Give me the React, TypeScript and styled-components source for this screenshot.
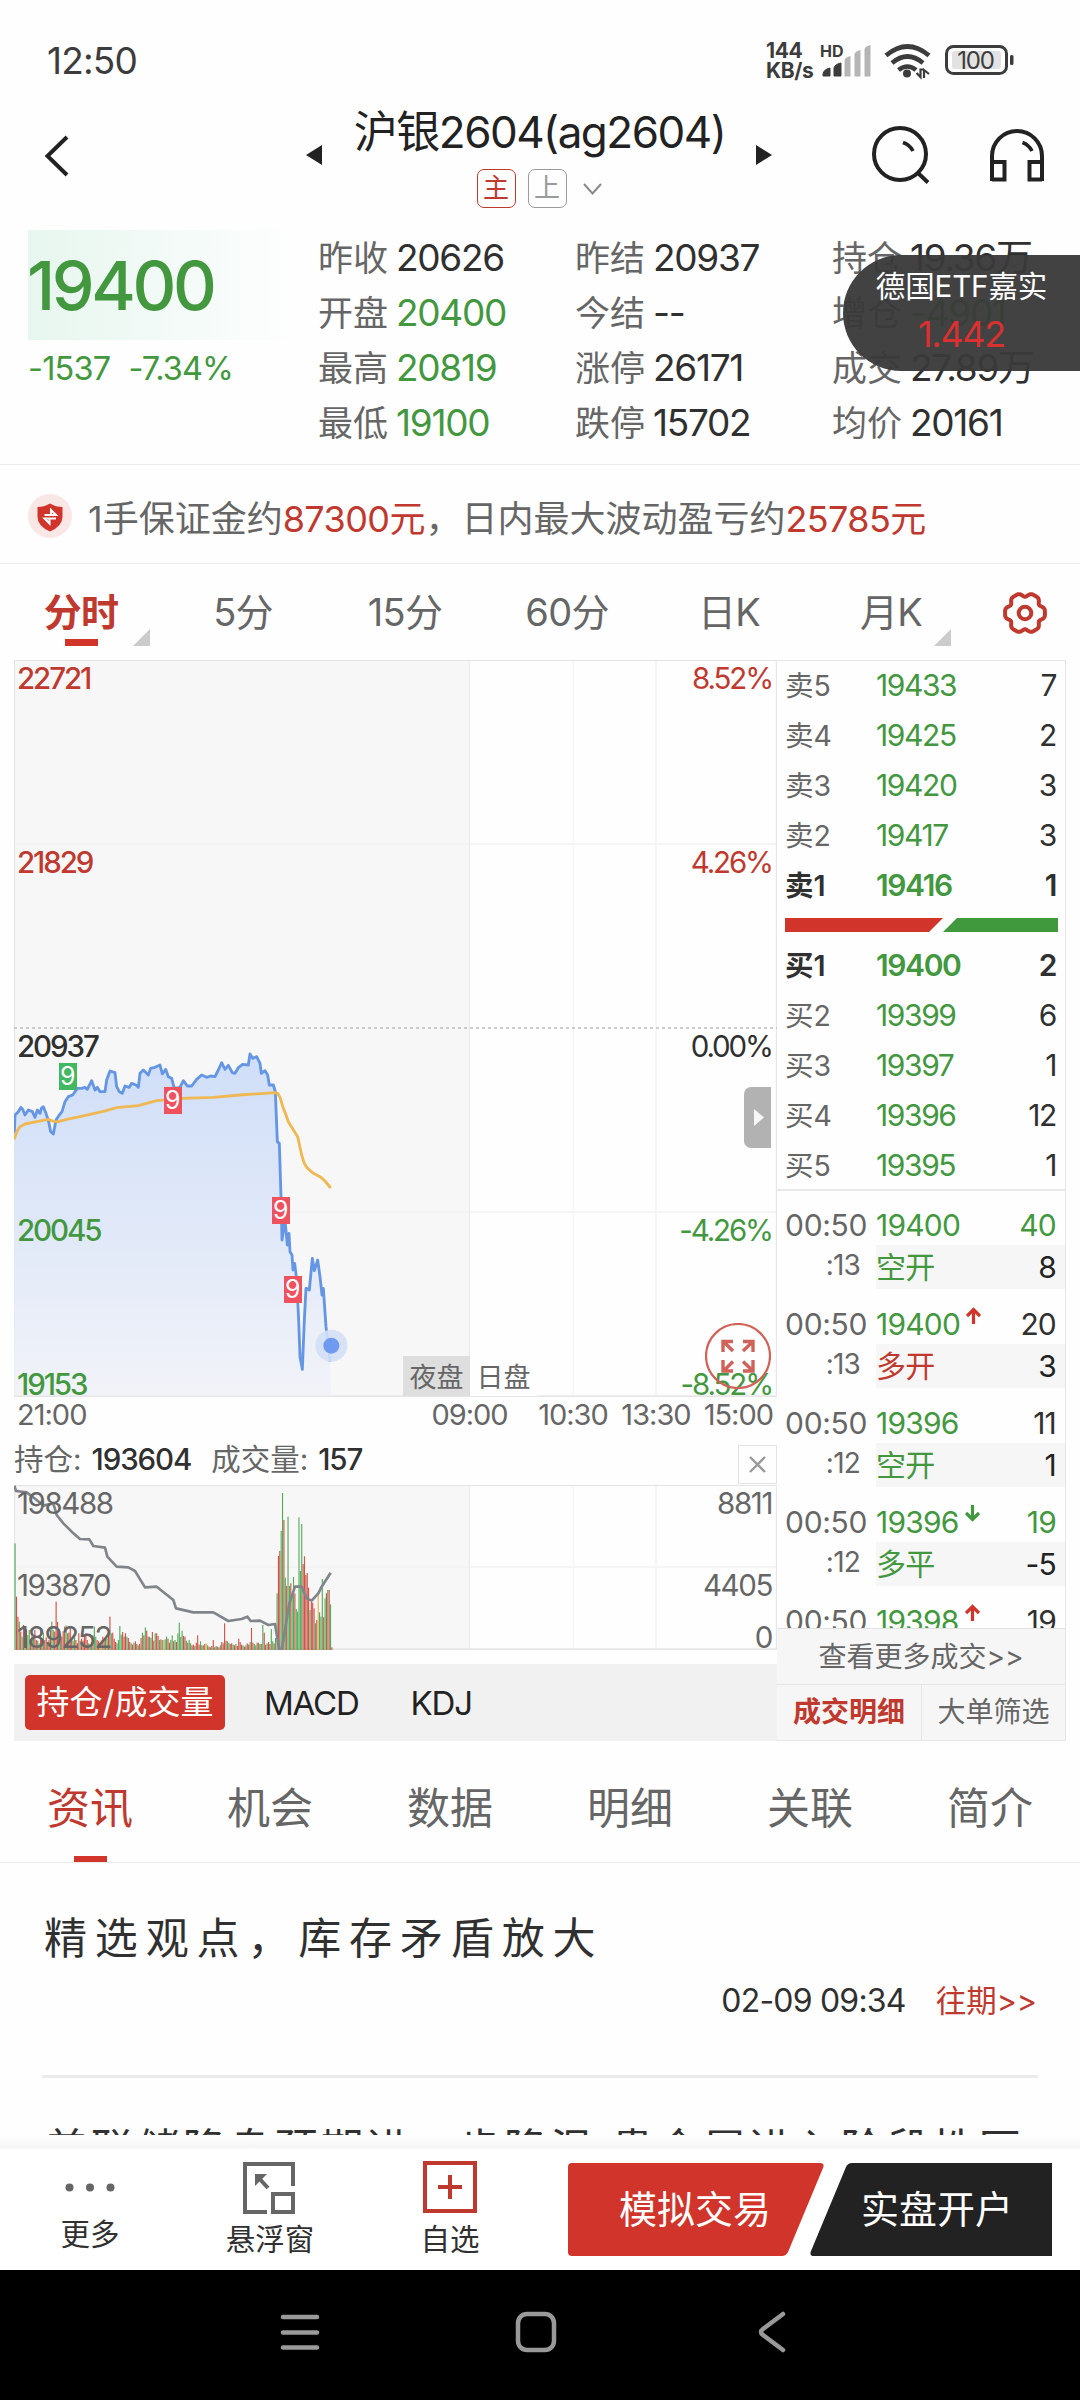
import React from "react";
import styled, { createGlobalStyle } from "styled-components";

const RED = "#d0342a";
const TEXT_RED = "#c0392f";
const GREEN = "#43983f";
const INK = "#303030";
const GREY = "#666666";

const GlobalStyle = createGlobalStyle`
  * { box-sizing: border-box; }
  body {
    margin: 0;
    background: #fff;
    color: ${INK};
    font-family: Inter, "Noto Sans CJK SC", sans-serif;
    white-space: nowrap;
  }
  svg { display: block; flex: none; }
`;

const Screen = styled.div`
  position: relative;
  width: 1080px;
  height: 2400px;
  display: flex;
  flex-direction: column;
  overflow: hidden;
  background: #fefefe;
`;

const Num = styled.span<{ $size: number; $color?: string; $weight?: number; $ls?: number }>`
  font-size: ${(p) => p.$size}px;
  color: ${(p) => p.$color ?? INK};
  font-weight: ${(p) => p.$weight ?? 400};
  letter-spacing: ${(p) => p.$ls ?? -1.3}px;
`;

/* ---------- status bar ---------- */

const StatusBar = styled.div`
  height: 110px;
  padding: 11px 65px 0 47px;
  display: flex;
  align-items: center;
  color: #3c3c3c;
`;
const Speed = styled.div`
  width: 53px;
  margin-left: auto;
  font-size: 21px;
  font-weight: 700;
  line-height: 20px;
  letter-spacing: -0.4px;
`;

const StatusIcons = () => (
  <svg width="196" height="40" viewBox="819 41 196 40">
    <text x="820" y="56.500" fontSize="16" fontWeight="700" fill="#3c3c3c" fontFamily="Inter">HD</text>
    <path d="M823 76v-2q1-5 7-6v8z M834 76v-8q1-4 7-5v13z" fill="#3c3c3c" stroke="#3c3c3c" />
    <path d="M844.500 76.500V60q1-3 6-4v20.500z M854.500 76.500V54q1-3 6-4v26.500z M864.500 76.500V49q1-3 6-4v31.500z" fill="#b5b5b5" />
    <g fill="none" stroke="#3c3c3c" strokeWidth="4.600">
      <path d="M886 55.500q21.500-18 43 0" />
      <path d="M892 63q15.500-13 31 0" />
      <path d="M898.500 70q9-7 17.500 0" />
    </g>
    <circle cx="907" cy="73.500" r="4" fill="#3c3c3c" />
    <path d="M916.500 73l4 4v-7.500h2v-1M924 78v-8l5 4" fill="none" stroke="#3c3c3c" strokeWidth="2.200" />
    <rect x="946.500" y="46.500" width="60" height="27" rx="7" fill="none" stroke="#3c3c3c" strokeWidth="3" />
    <rect x="952" y="51" width="49" height="18" rx="3" fill="#e2e2e2" />
    <rect x="1010" y="55" width="3.500" height="10" rx="1.500" fill="#3c3c3c" />
    <text x="975.500" y="68.700" fontSize="24" textAnchor="middle" letterSpacing="-1.200" fill="#3c3c3c" fontFamily="Inter">100</text>
  </svg>
);

/* ---------- title bar ---------- */

const TitleBar = styled.header`
  height: 106px;
  padding: 0 36px 0 44px;
  display: flex;
`;
const TitleGroup = styled.div`
  flex: 1;
  margin-left: 236px;
  display: flex;
  align-items: flex-start;
`;
const TitleCenter = styled.div`
  width: 434px;
  display: flex;
  flex-direction: column;
  align-items: center;
`;
const Title = styled.h1`
  margin: 0 0 0 1px;
  font-size: 44px;
  font-weight: 400;
  line-height: 44px;
  letter-spacing: -1.5px;
  color: #222;
  height: 59px;
`;
const Tags = styled.div`
  display: flex;
  align-items: center;
  gap: 12px;
`;
const Tag = styled.span<{ $color: string }>`
  width: 39px;
  height: 39px;
  border: 1.5px solid ${(p) => p.$color};
  border-radius: 7px;
  color: ${(p) => p.$color};
  font-size: 26px;
  line-height: 35px;
  text-align: center;
`;
const IconSlot = styled.div<{ $top: number }>`
  padding-top: ${(p) => p.$top}px;
`;

/* ---------- quote ---------- */

const Quote = styled.section`
  height: 248px;
  padding: 14px 0 0 28px;
  display: grid;
  grid-template-columns: 290px 257px 257px 1fr;
`;
const PriceBox = styled.div`
  height: 110px;
  width: 275px;
  background: linear-gradient(90deg, #e7f6ef, #fefefe);
  line-height: 110px;
  text-indent: -1px;
`;
const Change = styled.div`
  display: flex;
  gap: 18px;
  line-height: 57px;
`;
const StatColumn = styled.div`
  display: flex;
  flex-direction: column;
`;
const Stat = styled.div`
  height: 55px;
  line-height: 56px;
  display: flex;
  gap: 7px;
`;
const StatLabel = styled.span`
  width: 71px;
  font-size: 35px;
  color: ${GREY};
`;

type StatItem = [string, string, string?];
const STATS: StatItem[][] = [
  [["昨收", "20626"], ["开盘", "20400", GREEN], ["最高", "20819", GREEN], ["最低", "19100", GREEN]],
  [["昨结", "20937"], ["今结", "--"], ["涨停", "26171"], ["跌停", "15702"]],
  [["持仓", "19.36万"], ["增仓", "-4901", GREEN], ["成交", "27.89万"], ["均价", "20161"]],
];

const Floating = styled.aside`
  position: absolute;
  top: 255px;
  right: 0;
  width: 237px;
  height: 116px;
  padding: 6px 0 0 0;
  border-radius: 58px 0 0 58px;
  background: rgba(57, 57, 57, 0.955);
  display: flex;
  flex-direction: column;
  align-items: center;
  color: #fff;
  font-size: 29.500px;
  line-height: 50px;
  letter-spacing: -0.1px;
`;
const FloatingPrice = styled(Num)`
  line-height: 47px;
`;

/* ---------- notice ---------- */

const Notice = styled.section`
  height: 100px;
  padding: 4px 28px 0;
  border-top: 1px solid #ebebeb;
  border-bottom: 1px solid #ebebeb;
  display: flex;
  align-items: center;
  gap: 16px;
  font-size: 36px;
  color: ${GREY};
`;
const Hot = styled.b`
  font-weight: 400;
  color: ${TEXT_RED};
  i { font-style: normal; letter-spacing: -0.6px; }
`;

/* ---------- period tabs ---------- */

const Periods = styled.nav`
  height: 96px;
  display: grid;
  grid-template-columns: repeat(6, 162px) 1fr;
`;
const Period = styled.div<{ $active?: boolean; $more?: number }>`
  position: relative;
  display: flex;
  flex-direction: column;
  align-items: center;
  padding-top: 21px;
  font-size: 38px;
  line-height: 54px;
  letter-spacing: -0.7px;
  color: ${(p) => (p.$active ? TEXT_RED : GREY)};
  font-weight: ${(p) => (p.$active ? 600 : 400)};
  &::before {
    content: "";
    order: 1;
    width: 33px;
    height: 7px;
    background: ${(p) => (p.$active ? RED : "transparent")};
  }
  &::after {
    content: "";
    display: ${(p) => (p.$more ? "block" : "none")};
    position: absolute;
    right: ${(p) => p.$more}px;
    top: 65px;
    border-left: 17px solid transparent;
    border-bottom: 17px solid #cbcbcb;
  }
`;
const GearSlot = styled.div`
  padding: 27px 0 0 30px;
`;

const GEAR_OUTLINE = Array.from({ length: 180 }, (_, i) => {
  const a = (i / 180) * Math.PI * 2;
  const r = 18.7 + 1.85 * Math.cos(6 * a) - 0.65 * Math.cos(12 * a);
  return `${(23 + r * Math.cos(a)).toFixed(2)},${(22 + r * Math.sin(a)).toFixed(2)}`;
}).join(" ");

/* ---------- market panel ---------- */

const Market = styled.section`
  height: 1081px;
  padding-left: 14px;
  display: grid;
  grid-template-columns: 763px 289px;
`;
const ChartColumn = styled.div`
  display: flex;
  flex-direction: column;
`;
const ChartArea = styled.div<{ $h: number }>`
  position: relative;
  height: ${(p) => p.$h}px;
`;
const AxisLabel = styled.span<{ $y: number; $right?: boolean; $color: string; $bold?: boolean; $tight?: boolean }>`
  position: absolute;
  top: ${(p) => p.$y - 15}px;
  ${(p) => (p.$right ? "right: 5px;" : "left: 3px;")}
  font-size: 29.500px;
  line-height: 30px;
  letter-spacing: ${(p) => (p.$bold || p.$tight ? -2.1 : -1.4)}px;
  color: ${(p) => p.$color};
  font-weight: ${(p) => (p.$bold ? 500 : 400)};
`;
const Session = styled.span<{ $x: number; $night?: boolean }>`
  position: absolute;
  left: ${(p) => p.$x}px;
  bottom: 1px;
  width: 67px;
  height: 40px;
  background: ${(p) => (p.$night ? "#dedede" : "#fefefe")};
  font-size: 27px;
  line-height: 44px;
  text-align: center;
  color: ${GREY};
`;
const Marker = styled.span<{ $x: number; $y: number; $color: string }>`
  position: absolute;
  left: ${(p) => p.$x}px;
  top: ${(p) => p.$y}px;
  width: 17.500px;
  height: 27px;
  background: ${(p) => p.$color};
  color: #fff;
  font-size: 25px;
  line-height: 27px;
  text-align: center;
`;
const Drawer = styled.button`
  position: absolute;
  right: 6px;
  top: 427px;
  width: 27px;
  height: 61px;
  padding: 0 0 0 10px;
  border: 0;
  border-radius: 7px 0 0 7px;
  background: #b2b2b2;
`;
const Expand = styled.div`
  position: absolute;
  left: 691px;
  top: 663px;
`;
const TimeAxis = styled.div`
  height: 36px;
  display: grid;
  grid-template-columns: 403px 105px 102px 64px 89px;
  font-size: 29px;
  line-height: 36px;
  letter-spacing: -1px;
  color: ${GREY};
  text-align: center;
  span { margin: 0 -10px; }
  span:first-child { text-align: left; margin: 0 0 0 3px; }
  span:last-child { text-align: right; margin: 0 4px 0 0; }
`;
const VolumeInfo = styled.div`
  height: 52px;
  padding-bottom: 1px;
  display: flex;
  align-items: center;
  line-height: 46px;
  font-size: 29.500px;
  color: ${GREY};
`;
const InfoValue = styled.b`
  margin: 0 20px 0 10px;
  font-weight: 500;
  letter-spacing: -1.1px;
  color: ${INK};
`;
const CloseBox = styled.div`
  width: 39px;
  height: 39px;
  margin-left: auto;
  align-self: flex-end;
  border: 1px solid #e3e3e3;
  padding: 10px;
`;
const Indicators = styled.div`
  height: 77px;
  margin-top: 14px;
  padding-left: 11px;
  display: flex;
  align-items: center;
  background: #f1f1f1;
  font-size: 33px;
  color: #222;
`;
const ActiveIndicator = styled.span`
  width: 200px;
  height: 55px;
  margin-right: 39px;
  border-radius: 5px;
  background: ${RED};
  color: #fff;
  line-height: 54px;
  text-align: center;
`;
const Indicator = styled.span`
  margin-right: 52px;
  letter-spacing: -1.2px;
`;

/* ---------- order book ---------- */

const Book = styled.div`
  display: flex;
  flex-direction: column;
  border: 1px solid #e6e6e6;
  border-left: 0;
`;
const Levels = styled.div<{ $bids?: boolean }>`
  height: 257px;
  flex: none;
  padding-top: ${(p) => (p.$bids ? 9 : 0)}px;
  display: grid;
  grid-auto-rows: 50px;
`;
const Level = styled.div<{ $bold?: boolean }>`
  display: grid;
  grid-template-columns: 91px 1fr auto;
  padding: 0 9px 0 8px;
  font-size: 30px;
  line-height: 49px;
  letter-spacing: -1.4px;
  font-weight: ${(p) => (p.$bold ? 600 : 400)};
  color: ${INK};
`;
const LevelName = styled.span<{ $bold?: boolean }>`
  font-size: 28.500px;
  letter-spacing: 0;
  color: ${(p) => (p.$bold ? INK : GREY)};
`;
const LevelPrice = styled.span`
  color: ${GREEN};
`;
const Trades = styled.div`
  height: 439px;
  flex: none;
  padding-top: 14px;
  border-top: 2px solid #e9e9e9;
  overflow: hidden;
`;
const Trade = styled.div`
  height: 99px;
  display: grid;
  grid-template-columns: 99px 1fr;
  grid-template-rows: 40px 44px;
  align-content: start;
  font-size: 30px;
  letter-spacing: -0.8px;
  line-height: 40px;
`;
const TradeTime = styled.span`
  padding-left: 8px;
  letter-spacing: -0.3px;
  color: ${GREY};
`;
const TradeSecond = styled.span`
  padding-right: 16px;
  font-size: 28px;
  line-height: 40px;
  text-align: right;
  color: ${GREY};
`;
const TradeMain = styled.span`
  display: flex;
  padding-right: 9px;
  svg { margin: 3px 0 0 6px; }
`;
const TradeSide = styled.span`
  display: flex;
  justify-content: space-between;
  padding: 0 9px 0 0;
  background: #f6f6f6;
  line-height: 44px;
`;
const Tint = styled.span<{ $c: string; $push?: boolean }>`
  color: ${(p) => p.$c};
  margin-left: ${(p) => (p.$push ? "auto" : "0")};
`;
const MoreTrades = styled.div`
  height: 56px;
  border-top: 1px solid #e2e2e2;
  background: #f6f6f6;
  font-size: 28px;
  line-height: 56px;
  text-align: center;
  color: ${GREY};
`;
const TradeTabs = styled.div`
  flex: 1;
  display: grid;
  grid-template-columns: 145px 1fr;
  border-top: 1px solid #e6e6e6;
  background: #f6f6f6;
  font-size: 28px;
  line-height: 54px;
  text-align: center;
  color: ${GREY};
`;
const ActiveTradeTab = styled.span`
  border-right: 1px solid #e6e6e6;
  font-weight: 700;
  color: ${TEXT_RED};
`;

const ASKS: [string, string, string][] = [
  ["卖5", "19433", "7"], ["卖4", "19425", "2"], ["卖3", "19420", "3"], ["卖2", "19417", "3"], ["卖1", "19416", "1"],
];
const BIDS: [string, string, string][] = [
  ["买1", "19400", "2"], ["买2", "19399", "6"], ["买3", "19397", "1"], ["买4", "19396", "12"], ["买5", "19395", "1"],
];
type TradeItem = { s?: string; price: string; dir?: "up" | "down"; qty: string; qc: string; side?: string; sc?: string; d?: string };
const TRADES: TradeItem[] = [
  { s: ":13", price: "19400", qty: "40", qc: GREEN, side: "空开", sc: GREEN, d: "8" },
  { s: ":13", price: "19400", dir: "up", qty: "20", qc: INK, side: "多开", sc: TEXT_RED, d: "3" },
  { s: ":12", price: "19396", qty: "11", qc: INK, side: "空开", sc: GREEN, d: "1" },
  { s: ":12", price: "19396", dir: "down", qty: "19", qc: GREEN, side: "多平", sc: GREEN, d: "-5" },
  { price: "19398", dir: "up", qty: "19", qc: INK },
];

const LevelRow = ({ row, bold }: { row: [string, string, string]; bold?: boolean }) => (
  <Level $bold={bold}>
    <LevelName $bold={bold}>{row[0]}</LevelName>
    <LevelPrice>{row[1]}</LevelPrice>
    <span>{row[2]}</span>
  </Level>
);

const Arrow = ({ dir }: { dir: "up" | "down" }) => (
  <svg width="15" height="17" viewBox="0 0 15 17" fill="none" stroke={dir === "up" ? RED : GREEN} strokeWidth="3.200">
    {dir === "up" ? <path d="M7.500 17V2.500M1 9L7.500 2.500L14 9" /> : <path d="M7.500 0v14.500M1 8L7.500 14.500L14 8" />}
  </svg>
);

/* ---------- chart data: plotted at three units per pixel ---------- */

const PRICE =
  "43,400 45,345 55,335 63,322 68,328 75,345 85,330 97,335 105,352 112,330 120,340 124,325 130,320 138,340 146,365 152,395 160,402 168,360 178,345 186,335 195,305 205,290 218,285 232,265 245,265 255,262 262,268 275,242 285,270 292,262 300,275 315,275 320,240 330,213 345,218 350,260 358,275 367,280 375,258 388,262 395,250 408,255 415,262 420,220 430,210 445,225 452,205 465,202 480,195 487,222 497,208 505,230 515,235 523,265 540,262 550,242 562,258 575,258 590,238 605,225 620,232 632,228 645,230 655,210 665,188 675,208 685,196 697,218 705,220 715,203 728,193 745,195 750,162 758,175 770,170 780,190 784,220 795,212 803,225 808,255 820,255 826,275 832,425 838,430 843,590 846,720 855,660 862,735 867,700 870,755 876,765 879,810 884,790 890,840 896,960 900,1070 907,1108 913,960 918,865 928,870 937,775 943,812 953,780 960,830 966,885 970,865 978,980 990,1085";
const AVERAGE =
  "43,418 50,395 60,380 75,372 110,365 145,358 160,364 175,365 200,358 240,350 310,334 350,323 415,317 470,302 545,295 640,292 720,285 826,278 833,280 840,292 850,325 858,345 865,365 893,410 905,465 912,488 920,502 940,520 960,530 975,543 992,564";
const HOLDING =
  "43,197 48,213 80,217 110,240 130,257 160,250 170,285 190,310 215,335 240,357 268,358 280,378 315,383 322,410 350,440 385,442 405,453 435,502 470,500 520,540 528,565 580,577 640,577 685,603 725,597 742,590 752,603 780,602 805,615 825,612 838,690 845,690 855,630 868,550 885,500 905,500 920,535 935,542 955,520 965,500 978,480 992,458";

const UP = "#cf5347";
const DOWN = "#55ab59";
const FLAT = "#e6b04e";
const COLORS: Record<string, string> = { r: UP, g: DOWN, y: FLAT };
const EVENING =
  "g320 r160 r100 g85 r55 g40 r75 g30 r62 g45 g60 r25 r48 g35 r60 r30 g28 g20 r64 r34 g52 r30 r38 g25 r30 r60 g85 g60 r55 r145 r84 g62 g48 r40 r56 r70 g74 g50 r52 r66 r34 g28 g45 r30 r20 r50 g28 r34 r28 r42 r50 r30 g20 r18 g24 r44 g70 g40 r30 r26 g20 y30 r40 g28 r36 g34 r50 r100 g50 r52 r34 r24 g20 g30 g72 g46 r54 r40 r50 g40 r36 r24 g20 r16 g22 r26 r18 g14 r18 r36 g52 r44 g68 r58 r40 g40 g36 r54 r28 g50 r50 r42 g30 r32 g30 y30 g32 g40 r34 r22 g30 g44 r26 g30 r24 g50 g82 g40 g58 r42 r40 g28 r22 g30 g20 r14 r16 g12 r22 r44 r16 g26 r14 g14 r18 y20 g14 r10 g8 r12 r30 g8 r12 g10 r8 g14 r24 r20 r80 r28 g26 g22 r18 r20 g16 r14 g18 r12 r34 r24 r16 g14 r10 g14 r20 r16 g24 r66 r22 g18 g14 r22 g22 r18 g18 g75 r52 r16 g20 r24 r18 g63 g26 r20 g36".split(" ");
const SELLOFF =
  "g170 r282 r297 g357 g471 r390 g217 r192 g400 g192 r200 g165 g219 r170 g123 g115 g398 g237 g378 r258 r281 r225 r231 r187 g120 r145 r142 r125 g80 r90 y168 g113 g100 g213 r98 g155 r170 g180 r180 g137 r8".split(" ");
const toBars = (list: string[], from: number, to: number) =>
  list.map((v, i) => ({ x: from + ((to - from) * i) / (list.length - 1), h: Number(v.slice(1)), c: COLORS[v[0]] }));
const BARS = [...toBars(EVENING, 43.5, 825), ...toBars(SELLOFF, 829.5, 994)];

const Grid = ({ top, bottom, rows }: { top: number; bottom: number; rows: number[] }) => (
  <g>
    <rect x="42" y={top} width="1366" height={bottom - top} fill="#f7f7f7" />
    {rows.map((y) => <path key={y} d={`M42 ${y}H2331`} stroke="#f2f2f2" strokeWidth="4" />)}
    <path d={`M1408 ${top}V${bottom}`} stroke="#ededed" strokeWidth="4" />
    <path d={`M1720 ${top}V${bottom}M1968 ${top}V${bottom}`} stroke="#f5f5f5" strokeWidth="5" />
    <path d={`M43.500 ${bottom}V${top + 1.5}H2329V${bottom}`} fill="none" stroke="#e3e3e3" strokeWidth="3" />
    <path d={`M42 ${bottom - 2.5}H2331`} stroke="#e6e6e6" strokeWidth="5" />
  </g>
);

const PriceChart = () => (
  <ChartArea $h={737}>
    <svg width="763" height="737" viewBox="42 -1020 2289 2211">
      <defs>
        <linearGradient id="area" x1="0" y1="0" x2="0" y2="1">
          <stop offset="0" stopColor="#cfdef8" />
          <stop offset="1" stopColor="#f1f3f8" />
        </linearGradient>
      </defs>
      <Grid top={-1020} bottom={1191} rows={[-468, 636]} />
      <polygon points={`43,1186 ${PRICE} 993,1186`} fill="url(#area)" />
      <path d="M42 84H2331" stroke="#bdbdbd" strokeWidth="5" strokeDasharray="9 9" />
      <polyline points={PRICE} fill="none" stroke="#6496e4" strokeWidth="8.500" strokeLinejoin="round" />
      <polyline points={AVERAGE} fill="none" stroke="#efb853" strokeWidth="8.500" strokeLinejoin="round" />
      <circle cx="994" cy="1037" r="48" fill="#d3dff6" fillOpacity="0.900" />
      <circle cx="994" cy="1037" r="24" fill="#6e9bf0" />
    </svg>
    <AxisLabel $y={17.5} $color={TEXT_RED} $bold>22721</AxisLabel>
    <AxisLabel $y={201.5} $color={TEXT_RED} $bold>21829</AxisLabel>
    <AxisLabel $y={385.5} $color={INK} $bold>20937</AxisLabel>
    <AxisLabel $y={569.5} $color={GREEN} $bold>20045</AxisLabel>
    <AxisLabel $y={723.5} $color={GREEN} $bold>19153</AxisLabel>
    <AxisLabel $y={17.5} $color={TEXT_RED} $right $tight>8.52%</AxisLabel>
    <AxisLabel $y={201.5} $color={TEXT_RED} $right $tight>4.26%</AxisLabel>
    <AxisLabel $y={385.5} $color={INK} $right $tight>0.00%</AxisLabel>
    <AxisLabel $y={569.5} $color={GREEN} $right $tight>-4.26%</AxisLabel>
    <AxisLabel $y={723.5} $color={GREEN} $right $tight>-8.52%</AxisLabel>
    <Session $x={389} $night>夜盘</Session>
    <Session $x={456}>日盘</Session>
    <Marker $x={45} $y={403} $color="#43b862">9</Marker>
    <Marker $x={150} $y={427} $color="#ef525f">9</Marker>
    <Marker $x={258} $y={537} $color="#ef525f">9</Marker>
    <Marker $x={270} $y={616} $color="#ef525f">9</Marker>
    <Drawer>
      <svg width="10" height="17" viewBox="0 0 10 17"><path d="M0 0L10 8.500L0 17z" fill="#f7f7f7" /></svg>
    </Drawer>
    <Expand>
      <svg width="66" height="66" viewBox="0 0 66 66" fill="none" stroke="#d0625a">
        <circle cx="33" cy="33" r="32" strokeWidth="2.200" />
        <path strokeWidth="3.400" d="M18 29V18.500H28M18.500 18.500L28 28M38 18.500H48V29M48 18.500L38 28M18 37V48H28M18.500 48L28 38.500M38 48H48V37M48 48L38 38.500" />
      </svg>
    </Expand>
  </ChartArea>
);

const VolumeChart = () => (
  <ChartArea $h={165}>
    <svg width="763" height="165" viewBox="42 195 2289 495">
      <Grid top={195} bottom={690} rows={[441]} />
      {BARS.map((b, i) => <rect key={i} x={b.x} y={690 - b.h} width="3.400" height={b.h} fill={b.c} />)}
      <polyline points={HOLDING} fill="none" stroke="#80858c" strokeWidth="8" strokeLinejoin="round" />
    </svg>
    <AxisLabel $y={18} $color={GREY}>198488</AxisLabel>
    <AxisLabel $y={100} $color={GREY}>193870</AxisLabel>
    <AxisLabel $y={152} $color={GREY}>189252</AxisLabel>
    <AxisLabel $y={18} $color={GREY} $right>8811</AxisLabel>
    <AxisLabel $y={100} $color={GREY} $right>4405</AxisLabel>
    <AxisLabel $y={152} $color={GREY} $right>0</AxisLabel>
  </ChartArea>
);

/* ---------- news ---------- */

const Sections = styled.nav`
  height: 122px;
  display: grid;
  grid-template-columns: repeat(6, 1fr);
  border-bottom: 1px solid #e8e8e8;
`;
const SectionTab = styled.span<{ $active?: boolean }>`
  display: flex;
  flex-direction: column;
  align-items: center;
  justify-content: space-between;
  padding-top: 36px;
  font-size: 43px;
  line-height: 62px;
  color: ${(p) => (p.$active ? TEXT_RED : GREY)};
  &::after {
    content: "";
    width: 33px;
    height: 6px;
    background: ${(p) => (p.$active ? RED : "transparent")};
  }
`;
const News = styled.article`
  height: 272px;
  flex: none;
  margin: 0 42px;
  padding-top: 44px;
  overflow: hidden;
`;
const Headline = styled.div`
  padding-left: 2px;
  font-size: 43px;
  line-height: 62px;
  letter-spacing: 7.850px;
`;
const NewsMeta = styled.div`
  height: 109px;
  display: flex;
  justify-content: flex-end;
  gap: 30px;
  padding: 7px 1px 0 0;
  font-size: 30.500px;
  line-height: 50px;
  color: ${TEXT_RED};
  border-bottom: 3px solid #ebebeb;
`;
const NextHeadline = styled.div`
  padding: 44px 0 0 3px;
  font-size: 43px;
  line-height: 54px;
  letter-spacing: 2.900px;
`;

/* ---------- bottom actions ---------- */

const ActionBar = styled.footer`
  height: 135px;
  padding: 28px 28px 0 0;
  display: flex;
  background: linear-gradient(180deg, #fefefe 0, #f5f5f5 13px, #ffffff 14px);
`;
const Action = styled.div<{ $up: number; $gap: number }>`
  width: 180px;
  margin-top: ${(p) => -p.$up}px;
  display: flex;
  flex-direction: column;
  align-items: center;
  gap: ${(p) => p.$gap}px;
  font-size: 29.500px;
  line-height: 34px;
  color: ${INK};
`;
const TradeButtons = styled.div`
  margin-left: 28px;
  width: 484px;
  height: 93px;
  color: #fff;
  font-size: 38px;
  line-height: 92px;
  display: grid;
  grid-template-columns: 254px 230px;
`;
const ButtonShapes = styled.svg`
  grid-area: 1 / 1 / 2 / 3;
`;
const ButtonText = styled.span<{ $col: number }>`
  grid-area: 1 / ${(p) => p.$col};
  text-align: center;
`;

const SystemNav = styled.div`
  flex: 1;
  background: #000;
  display: flex;
  justify-content: center;
  padding-top: 40px;
`;

export default function App() {
  return (
    <Screen>
      <GlobalStyle />
      <StatusBar>
        <Num $size={37} $color="#3c3c3c" $ls={-0.8}>12:50</Num>
        <Speed>144<br />KB/s</Speed>
        <StatusIcons />
      </StatusBar>

      <TitleBar>
        <IconSlot $top={25}>
          <svg width="26" height="42" viewBox="0 0 26 42"><path d="M23 2L3.500 21L23 40" fill="none" stroke="#222" strokeWidth="4" /></svg>
        </IconSlot>
        <TitleGroup>
          <IconSlot $top={35}>
            <svg width="16" height="20" viewBox="0 0 16 20"><path d="M16 0V20L0 10z" fill="#222" /></svg>
          </IconSlot>
          <TitleCenter>
            <Title>沪银2604(ag2604)</Title>
            <Tags>
              <Tag $color={TEXT_RED}>主</Tag>
              <Tag $color="#9a9a9a">上</Tag>
              <svg width="23" height="12" viewBox="-5 0 23 12"><path d="M0 1L8.500 10.500L17 1" fill="none" stroke="#888" strokeWidth="2" /></svg>
            </Tags>
          </TitleCenter>
          <IconSlot $top={35}>
            <svg width="16" height="20" viewBox="0 0 16 20"><path d="M0 0V20L16 10z" fill="#222" /></svg>
          </IconSlot>
        </TitleGroup>
        <IconSlot $top={15}>
          <svg width="174" height="62" viewBox="870 125 174 62" fill="none" stroke="#222" strokeWidth="4">
            <circle cx="900" cy="154" r="26" />
            <path d="M918 173L928 182.500" />
            <path d="M903 142.500Q910 145 913 151M1022.500 142.500Q1029 145 1032 151" strokeWidth="3.600" />
            <path d="M992 181V156a25 25 0 0 1 50 0V181M992 162H1004.500V179.500H992M1042 162H1029.500V179.500H1042" />
          </svg>
        </IconSlot>
      </TitleBar>

      <Quote>
        <div>
          <PriceBox><Num $size={68} $color={GREEN} $weight={500} $ls={-3.4}>19400</Num></PriceBox>
          <Change>
            <Num $size={32.5} $color={GREEN} $ls={-0.8}>-1537</Num>
            <Num $size={32.5} $color={GREEN} $ls={-0.9}>-7.34%</Num>
          </Change>
        </div>
        {STATS.map((col, i) => (
          <StatColumn key={i}>
            {col.map(([label, value, color]) => (
              <Stat key={label}>
                <StatLabel>{label}</StatLabel>
                <Num $size={37} $color={color}>{value}</Num>
              </Stat>
            ))}
          </StatColumn>
        ))}
      </Quote>

      <Notice>
        <svg width="44" height="44" viewBox="0 0 44 44">
          <circle cx="22" cy="22" r="22" fill="#f9e7e6" />
          <path d="M22 9.500Q28 13 34.500 13V23Q34.500 32 22 37.500Q9.500 32 9.500 23V13Q16 13 22 9.500z" fill={RED} />
          <path d="M16.500 21H28L23 16V20.500M28 24.500H16.500L21.500 29.500V25" stroke="#fff" strokeWidth="2" fill="none" />
        </svg>
        <span>1手保证金约<Hot><i>87300</i>元</Hot>，日内最大波动盈亏约<Hot><i>25785</i>元</Hot></span>
      </Notice>

      <Periods>
        <Period $active $more={12}>分时</Period>
        <Period>5分</Period>
        <Period>15分</Period>
        <Period>60分</Period>
        <Period>日K</Period>
        <Period $more={21}>月K</Period>
        <GearSlot>
          <svg width="46" height="44" viewBox="0 0 46 44" fill="none" stroke={TEXT_RED} strokeWidth="4">
            <polygon points={GEAR_OUTLINE} strokeLinejoin="round" />
            <circle cx="23" cy="22" r="6.300" />
          </svg>
        </GearSlot>
      </Periods>

      <Market>
        <ChartColumn>
          <PriceChart />
          <TimeAxis>
            <span>21:00</span><span>09:00</span><span>10:30</span><span>13:30</span><span>15:00</span>
          </TimeAxis>
          <VolumeInfo>
            持仓:<InfoValue>193604</InfoValue>成交量:<InfoValue>157</InfoValue>
            <CloseBox>
              <svg width="17" height="17" viewBox="0 0 17 17"><path d="M1 1L16 16M16 1L1 16" stroke="#999" strokeWidth="2.400" /></svg>
            </CloseBox>
          </VolumeInfo>
          <VolumeChart />
          <Indicators>
            <ActiveIndicator>持仓/成交量</ActiveIndicator>
            <Indicator>MACD</Indicator>
            <Indicator>KDJ</Indicator>
          </Indicators>
        </ChartColumn>
        <Book>
          <Levels>
            {ASKS.map((r, i) => <LevelRow key={r[0]} row={r} bold={i === 4} />)}
          </Levels>
          <svg width="288" height="14" viewBox="777 900 288 14">
            <path d="M785 900H943L929 914H785z" fill={RED} />
            <path d="M957 900H1058V914H943z" fill="#41993d" />
          </svg>
          <Levels $bids>
            {BIDS.map((r, i) => <LevelRow key={r[0]} row={r} bold={i === 0} />)}
          </Levels>
          <Trades>
            {TRADES.map((t, i) => (
              <Trade key={i}>
                <TradeTime>00:50</TradeTime>
                <TradeMain>
                  <Tint $c={GREEN}>{t.price}</Tint>
                  {t.dir && <Arrow dir={t.dir} />}
                  <Tint $c={t.qc} $push>{t.qty}</Tint>
                </TradeMain>
                {t.side && (
                  <>
                    <TradeSecond>{t.s}</TradeSecond>
                    <TradeSide>
                      <Tint $c={t.sc ?? INK}>{t.side}</Tint>
                      <Tint $c="#222">{t.d}</Tint>
                    </TradeSide>
                  </>
                )}
              </Trade>
            ))}
          </Trades>
          <MoreTrades>查看更多成交&gt;&gt;</MoreTrades>
          <TradeTabs>
            <ActiveTradeTab>成交明细</ActiveTradeTab>
            <span>大单筛选</span>
          </TradeTabs>
        </Book>
      </Market>

      <Sections>
        {["资讯", "机会", "数据", "明细", "关联", "简介"].map((t, i) => (
          <SectionTab key={t} $active={i === 0}>{t}</SectionTab>
        ))}
      </Sections>

      <News>
        <Headline>精选观点，库存矛盾放大</Headline>
        <NewsMeta>
          <Num $size={32} $ls={-0.8}>02-09 09:34</Num>
          <span>往期&gt;&gt;</span>
        </NewsMeta>
        <NextHeadline>美联储降息预期进一步降温,贵金属进入阶段性区</NextHeadline>
      </News>

      <ActionBar>
        <Action $up={-20} $gap={25}>
          <svg width="50" height="9" viewBox="0 0 50 9" fill={GREY}>
            <circle cx="4.500" cy="4.500" r="4" /><circle cx="25" cy="4.500" r="4" /><circle cx="45.500" cy="4.500" r="4" />
          </svg>
          更多
        </Action>
        <Action $up={1} $gap={8}>
          <svg width="54" height="52" viewBox="0 0 54 52" fill="none" stroke={GREY} strokeWidth="4">
            <path d="M50 24V2H2V50H24M30 32H50V50H30z" />
            <path d="M12 12H24L12 24z" fill={GREY} stroke="none" />
            <path d="M14 14L25 26" />
          </svg>
          悬浮窗
        </Action>
        <Action $up={2} $gap={9}>
          <svg width="54" height="52" viewBox="0 0 54 52" fill="none" stroke={TEXT_RED} strokeWidth="4">
            <path d="M2 2H52V50H2zM27 14V38M15 26H39" />
          </svg>
          自选
        </Action>
        <TradeButtons>
          <ButtonShapes width="484" height="93" viewBox="0 0 484 93">
            <path d="M4 0H252Q257 0 255 5L220 89Q218 93 214 93H4Q0 93 0 89V4Q0 0 4 0z" fill={RED} />
            <path d="M284 0H484V93H246Q241 93 243 88L278 4Q280 0 284 0z" fill="#222" />
          </ButtonShapes>
          <ButtonText $col={1}>模拟交易</ButtonText>
          <ButtonText $col={2}>实盘开户</ButtonText>
        </TradeButtons>
      </ActionBar>

      <SystemNav>
        <svg width="520" height="44" viewBox="280 2310 520 44" fill="none" stroke="#999" strokeWidth="4.500" strokeLinecap="round">
          <path d="M283 2317H317M283 2332.500H317M283 2347.500H317" />
          <rect x="518" y="2314" width="36" height="36" rx="9" />
          <path d="M783 2314L763 2329Q759 2332 763 2335L783 2350" />
        </svg>
      </SystemNav>

      <Floating>
        德国ETF嘉实
        <FloatingPrice $size={36} $color="#d93030">1.442</FloatingPrice>
      </Floating>
    </Screen>
  );
}
